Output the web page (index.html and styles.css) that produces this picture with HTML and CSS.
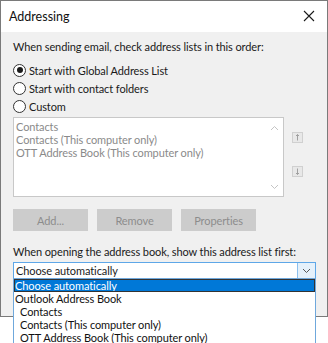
FILE: index.html
```html
<!DOCTYPE html>
<html>
<head>
<meta charset="utf-8">
<link rel="stylesheet" href="styles.css">
</head>
<body>
<div class="window">
  <div class="titlebar">
    <span class="title">Addressing</span>
    <svg class="close" width="12" height="12" viewBox="0 0 12 12"><path d="M1 1L11 11M11 1L1 11" stroke="#1a1a1a" stroke-width="1.1" fill="none"/></svg>
  </div>
  <div class="body">
    <div class="label first">When sending email, check address lists in this order:</div>
    <div class="radios">
      <div class="radio"><span class="circle checked"></span>Start with Global Address List</div>
      <div class="radio"><span class="circle"></span>Start with contact folders</div>
      <div class="radio"><span class="circle"></span>Custom</div>
    </div>
    <div class="listrow">
      <div class="listbox">
        <div class="items">
          <div>Contacts</div>
          <div>Contacts (This computer only)</div>
          <div>OTT Address Book (This computer only)</div>
        </div>
        <div class="scrollbar">
          <svg width="9" height="6" viewBox="0 0 9 6"><path d="M1 5L4.5 1.5L8 5" stroke="#c4c4c4" fill="none"/></svg>
          <svg width="9" height="6" viewBox="0 0 9 6"><path d="M1 1L4.5 4.5L8 1" stroke="#c4c4c4" fill="none"/></svg>
        </div>
      </div>
      <div class="movers">
        <div class="mover"><svg width="5" height="7" viewBox="0 0 5 7"><path d="M2.5 0.5V6.5M1 2L2.5 0.5L4 2" stroke="#a0a0a0" fill="none"/></svg></div>
        <div class="mover"><svg width="5" height="7" viewBox="0 0 5 7"><path d="M2.5 0.5V6.5M1 5L2.5 6.5L4 5" stroke="#a0a0a0" fill="none"/></svg></div>
      </div>
    </div>
    <div class="buttons">
      <div class="btn">Add...</div>
      <div class="btn">Remove</div>
      <div class="btn">Properties</div>
    </div>
    <div class="label second">When opening the address book, show this address list first:</div>
    <div class="combo">
      <span class="combo-text">Choose automatically</span>
      <span class="combo-btn"><svg width="9" height="6" viewBox="0 0 9 6"><path d="M1 1L4.5 4.5L8 1" stroke="#555" fill="none"/></svg></span>
    </div>
  </div>
</div>
<div class="dropdown">
  <div class="opt selected">Choose automatically</div>
  <div class="opt">Outlook Address Book</div>
  <div class="opt indent">Contacts</div>
  <div class="opt indent">Contacts (This computer only)</div>
  <div class="opt indent">OTT Address Book (This computer only)</div>
</div>
</body>
</html>
```

FILE: styles.css
```css
html, body {
  margin: 0;
  padding: 0;
  background: #ffffff;
  font-family: "Segoe UI", "Lato", "Noto Sans", sans-serif;
  font-size: 11px;
  letter-spacing: -0.1px;
  color: #1a1a1a;
}
.window {
  width: 328px;
  height: 317px;
  box-sizing: border-box;
  border: 1px solid #7a7a7a;
  background: #f0f0f0;
  display: flex;
  flex-direction: column;
}
.titlebar {
  height: 31px;
  background: #ffffff;
  display: flex;
  align-items: center;
  justify-content: space-between;
  padding: 0 12px 0 8px;
}
.title {
  font-size: 12.5px;
  letter-spacing: 0;
  color: #111;
}
.close {
  margin-top: -2px;
}
.body {
  padding: 0 12px 0 12px;
  display: flex;
  flex-direction: column;
}
.label {
  line-height: 16px;
  white-space: nowrap;
}
.label.first {
  margin-top: 7px;
}
.radios {
  margin-top: 7px;
  display: flex;
  flex-direction: column;
  gap: 2px;
}
.radio {
  display: flex;
  align-items: center;
  height: 16px;
  gap: 3px;
}
.circle {
  width: 13px;
  height: 13px;
  box-sizing: border-box;
  border: 1px solid #333;
  border-radius: 50%;
  background: #fff;
  position: relative;
  flex: none;
}
.circle.checked::after {
  content: "";
  position: absolute;
  left: 2.5px;
  top: 2.5px;
  width: 6px;
  height: 6px;
  border-radius: 50%;
  background: #1a1a1a;
}
.listrow {
  display: flex;
  margin-top: 3px;
}
.listbox {
  width: 271px;
  height: 80px;
  box-sizing: border-box;
  border: 1px solid #c8c8c8;
  background: #fff;
  display: flex;
}
.items {
  flex: 1;
  padding: 2px 2px;
  color: #8a8a8a;
  line-height: 13px;
  white-space: nowrap;
}
.scrollbar {
  width: 17px;
  display: flex;
  flex-direction: column;
  justify-content: space-between;
  align-items: center;
  padding: 7px 0 6px;
}
.movers {
  display: flex;
  flex-direction: column;
  gap: 23px;
  margin: 15px 0 0 8px;
}
.mover {
  width: 11px;
  height: 11px;
  box-sizing: border-box;
  border: 1px solid #d0d0d0;
  background: #e8e8e8;
  display: flex;
  align-items: center;
  justify-content: center;
}
.buttons {
  display: flex;
  gap: 9px;
  margin-top: 12px;
}
.btn {
  width: 75px;
  height: 22px;
  background: #cccccc;
  border: 1px solid #cccccc;
  box-sizing: border-box;
  color: #8c8c8c;
  display: flex;
  align-items: center;
  justify-content: center;
}
.label.second {
  margin-top: 13px;
}
.combo {
  margin-top: 2px;
  width: 303px;
  height: 17px;
  box-sizing: border-box;
  border: 1px solid #5ea7e8;
  background: #fff;
  display: flex;
  align-items: center;
}
.combo-text {
  flex: 1;
  padding-left: 2px;
  line-height: 15px;
}
.combo-btn {
  width: 17px;
  height: 15px;
  background: #e5f1fb;
  border-left: 1px solid #8cc0ee;
  display: flex;
  align-items: center;
  justify-content: center;
}
.dropdown {
  position: absolute;
  left: 13px;
  top: 278px;
  width: 303px;
  height: 70px;
  box-sizing: border-box;
  border: 1px solid #6fa8dc;
  background: #fff;
  color: #111;
  overflow: hidden;
}
.opt {
  height: 13px;
  line-height: 13px;
  padding-left: 1px;
  white-space: nowrap;
}
.opt.selected {
  background: #0078d7;
  color: #fff;
  outline: 1px solid #333;
  outline-offset: -1px;
}
.opt.indent {
  padding-left: 6px;
}
```
